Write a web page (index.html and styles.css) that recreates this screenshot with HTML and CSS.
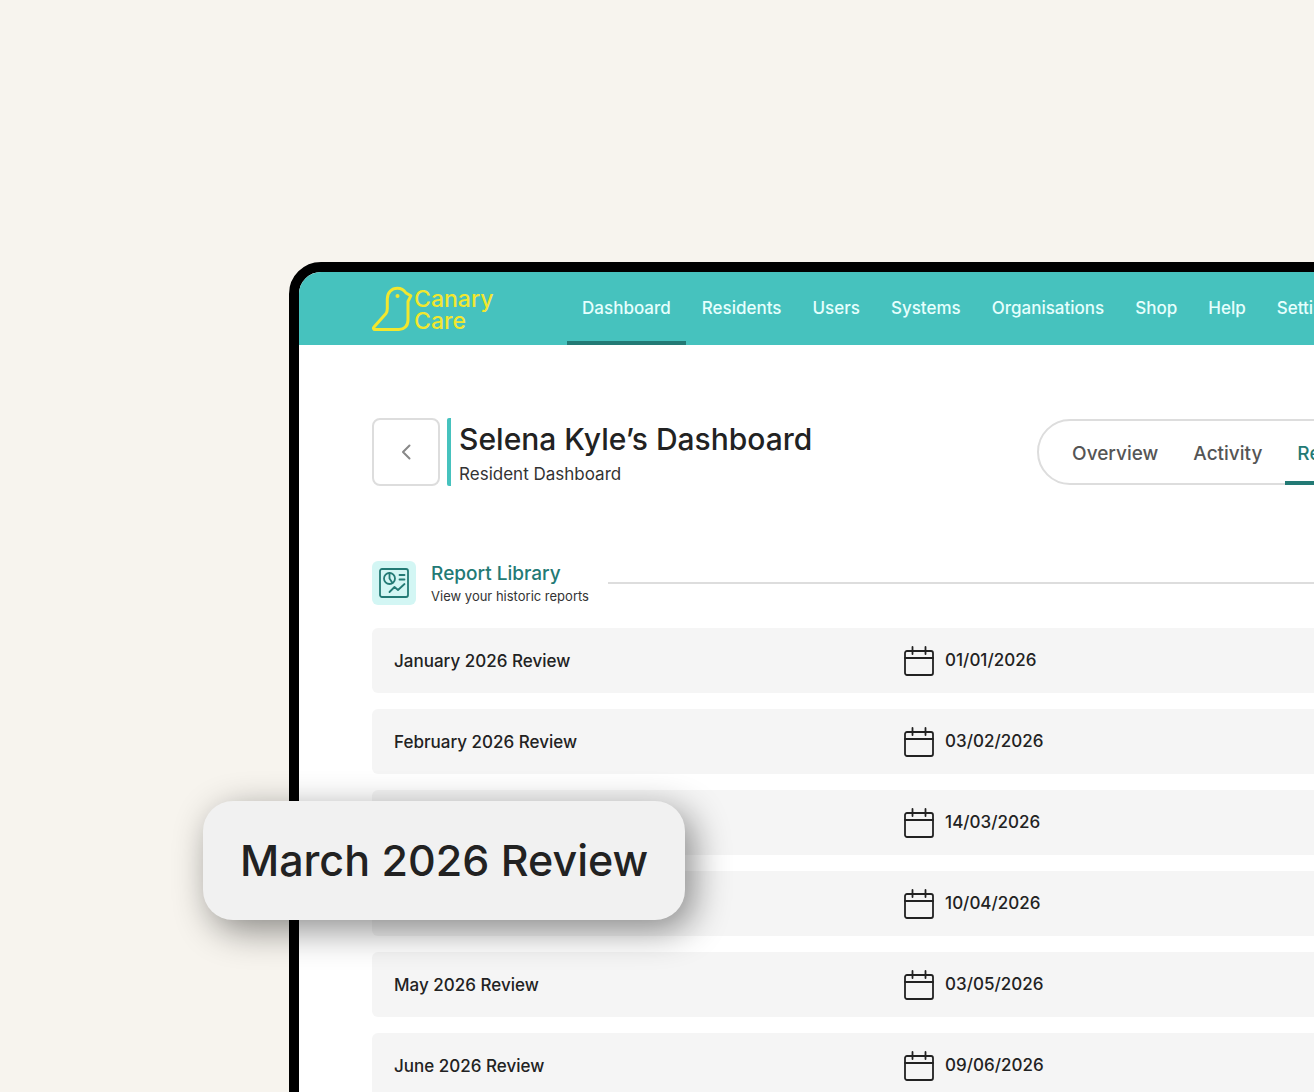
FILE: index.html
```html
<!DOCTYPE html>
<html lang="en">
<head>
    <meta charset="UTF-8">
    <meta name="viewport" content="width=device-width, initial-scale=1.0">
    <title>Canary Care - Report Library</title>
    <link rel="stylesheet" href="styles.css">
</head>
<body>
    <!-- Calendar icon shared by every report row -->
    <svg class="symbols" aria-hidden="true">
        <symbol id="calendar" viewBox="0 0 30 30">
            <rect x="1" y="5" width="28" height="24" rx="2"/>
            <path d="M1 12h28M8.5 1v7M21.5 1v7"/>
        </symbol>
    </svg>

    <div class="stage">
        <div class="device">
            <!-- Top Navigation -->
            <header class="topbar">
                <a href="#" class="logo">
                    <svg width="42" height="46" viewBox="0 0 42 46" aria-hidden="true">
                        <path d="M3 43.5C1.500 43.500 1 42 2 41L14 27.500C15 26 15.300 24.500 15.300 22.500V13C15.300 6.500 19.500 2.300 25.500 2.300C29.500 2.300 32 4.200 34 7L38.800 9.800L36 15.500V34C36 40 32 43.500 27 43.500Z"/>
                        <circle cx="25.5" cy="10" r="2"/>
                    </svg>
                    <span class="logo-text">
                        <span>Canary</span>
                        <span>Care</span>
                    </span>
                </a>
                <nav class="main-nav">
                    <a href="#" class="active">Dashboard</a>
                    <a href="#">Residents</a>
                    <a href="#">Users</a>
                    <a href="#">Systems</a>
                    <a href="#">Organisations</a>
                    <a href="#">Shop</a>
                    <a href="#">Help</a>
                    <a href="#">Settings</a>
                </nav>
            </header>

            <main class="content">
                <!-- Page Title -->
                <div class="page-head">
                    <button type="button" class="back-btn" aria-label="Back">
                        <svg width="10" height="16" viewBox="0 0 10 16"><path d="M8.5 1.5L2 8l6.500 6.500"/></svg>
                    </button>
                    <div class="page-title">
                        <h1>Selena Kyle’s Dashboard</h1>
                        <p>Resident Dashboard</p>
                    </div>
                    <nav class="tabs">
                        <a href="#">Overview</a>
                        <a href="#">Activity</a>
                        <a href="#" class="active">Reports</a>
                    </nav>
                </div>

                <!-- Report Library -->
                <div class="section-head">
                    <span class="section-icon">
                        <svg width="32" height="32" viewBox="0 0 32 32" aria-hidden="true">
                            <rect x="2" y="2" width="28" height="28" rx="2"/>
                            <circle cx="11.500" cy="11.500" r="5.500"/>
                            <path d="M11.500 6v5.500l3 4.500M21.500 8h5M21.500 12.500h5M11.500 25l5-5 3.500 3 6.500-6"/>
                        </svg>
                    </span>
                    <div class="section-title">
                        <h2>Report Library</h2>
                        <p>View your historic reports</p>
                    </div>
                    <hr>
                </div>

                <table class="reports">
                    <tbody>
                        <tr>
                            <td>January 2026 Review</td>
                            <td><svg class="calendar"><use href="#calendar"/></svg>01/01/2026</td>
                        </tr>
                        <tr>
                            <td>February 2026 Review</td>
                            <td><svg class="calendar"><use href="#calendar"/></svg>03/02/2026</td>
                        </tr>
                        <tr>
                            <td><strong class="callout">March 2026 Review</strong></td>
                            <td><svg class="calendar"><use href="#calendar"/></svg>14/03/2026</td>
                        </tr>
                        <tr>
                            <td>April 2026 Review</td>
                            <td><svg class="calendar"><use href="#calendar"/></svg>10/04/2026</td>
                        </tr>
                        <tr>
                            <td>May 2026 Review</td>
                            <td><svg class="calendar"><use href="#calendar"/></svg>03/05/2026</td>
                        </tr>
                        <tr>
                            <td>June 2026 Review</td>
                            <td><svg class="calendar"><use href="#calendar"/></svg>09/06/2026</td>
                        </tr>
                    </tbody>
                </table>
            </main>
        </div>
    </div>
</body>
</html>
```
FILE: styles.css
```css
* {
    box-sizing: border-box;
}

body {
    margin: 0;
    font-family: Inter, "Liberation Sans", sans-serif;
    color: #222;
    background-color: #f7f4ee;
}

h1, h2, p {
    margin: 0;
    font-weight: 500;
}

a {
    text-decoration: none;
}

svg {
    fill: none;
    stroke: currentColor;
    stroke-width: 2;
    stroke-linecap: round;
    stroke-linejoin: round;
}

.symbols {
    display: none;
}

/* The device runs off the right and bottom edges */
.stage {
    height: 100vh;
    overflow: hidden;
    padding: 262px 0 0 22%;
}

.device {
    width: 130%;
    min-width: 1200px;
    background-color: #fff;
    border: 10px solid #000;
    border-radius: 32px;
}

/* Top navigation */
.topbar {
    display: flex;
    height: 73px;
    padding-left: 73px;
    background-color: #46c2be;
    border-radius: 22px 22px 0 0;
}

.logo {
    display: flex;
    align-items: center;
    flex: none;
    width: 195px;
    color: #f2e72e;
    font-size: 23px;
    font-weight: 500;
    line-height: 22px;
}

.logo svg {
    stroke-width: 3;
}

.logo circle {
    fill: currentColor;
    stroke: none;
}

.logo-text {
    display: flex;
    flex-direction: column;
    padding-top: 3px;
}

.main-nav {
    display: flex;
    gap: 1px;
}

.main-nav a {
    display: flex;
    align-items: center;
    padding: 0 15px;
    color: #e6fffd;
    font-size: 17px;
    font-weight: 500;
    border-bottom: 4px solid transparent;
    border-top: 2px solid transparent;
}

.main-nav a.active {
    border-bottom-color: #237a75;
}

.content {
    padding: 73px;
}

/* Page title */
.page-head {
    display: flex;
    height: 68px;
    margin-bottom: 75px;
}

.back-btn {
    display: flex;
    align-items: center;
    justify-content: center;
    width: 68px;
    margin-right: 7px;
    color: #888;
    background-color: #fff;
    border: 2px solid #ddd;
    border-radius: 8px;
    cursor: pointer;
}

.page-title {
    flex: none;
    width: 590px;
    padding-left: 8px;
    border-left: 4px solid #46c2be;
    border-radius: 2px;
}

.page-title h1 {
    font-size: 30px;
    line-height: 42px;
}

.page-title p {
    color: #333;
    font-size: 17px;
    font-weight: 400;
    line-height: 28px;
}

.tabs {
    display: flex;
    align-self: center;
    flex: 1;
    height: 66px;
    padding-left: 21px;
    border: 2px solid #ddd;
    border-radius: 33px;
}

.tabs a {
    display: flex;
    align-items: center;
    padding: 0 12px;
    margin-right: 11px;
    margin-bottom: -2px;
    color: #555;
    font-size: 19px;
    font-weight: 500;
}

.tabs a.active {
    color: #237a75;
    box-shadow: inset 0 -4px #237a75;
}

/* Report library heading */
.section-head {
    display: flex;
    align-items: center;
    height: 44px;
    margin-bottom: 7px;
}

.section-icon {
    display: flex;
    align-items: center;
    justify-content: center;
    width: 44px;
    height: 44px;
    margin-right: 15px;
    color: #237a75;
    background-color: #d3f6f4;
    border-radius: 6px;
}

.section-icon svg {
    stroke-width: 1.8;
}

.section-title {
    width: 161px;
    margin-right: 16px;
    padding-top: 2px;
    white-space: nowrap;
}

.section-title h2 {
    color: #237a75;
    font-size: 19px;
    line-height: 24px;
}

.section-title p {
    color: #333;
    font-size: 13px;
    font-weight: 400;
    line-height: 20px;
}

.section-head hr {
    flex: 1;
    margin: 0;
    border: 0;
    border-top: 2px solid #ddd;
}

/* Report rows */
.reports {
    width: 100%;
    table-layout: fixed;
    border-collapse: separate;
    border-spacing: 0 16px;
}

.reports tr {
    position: relative;
}

.reports td {
    height: 65px;
    padding: 0;
    background-color: #f5f5f5;
    font-size: 17px;
    font-weight: 500;
}

.reports td:first-child {
    width: 532px;
    padding-left: 22px;
    border-radius: 6px 0 0 6px;
}

.reports td:last-child {
    border-radius: 0 6px 6px 0;
}

.calendar {
    width: 30px;
    height: 30px;
    margin-right: 11px;
    stroke-width: 1.8;
    vertical-align: middle;
}

/* Enlarged report name that floats over the list */
.callout {
    position: absolute;
    top: 11px;
    left: -169px;
    z-index: 1;
    width: 482px;
    background-color: #f1f1f1;
    border-radius: 30px;
    box-shadow: 8px 10px 36px rgba(0, 0, 0, 0.45);
    font-size: 43px;
    font-weight: 500;
    line-height: 119px;
    text-align: center;
    white-space: nowrap;
}
```
